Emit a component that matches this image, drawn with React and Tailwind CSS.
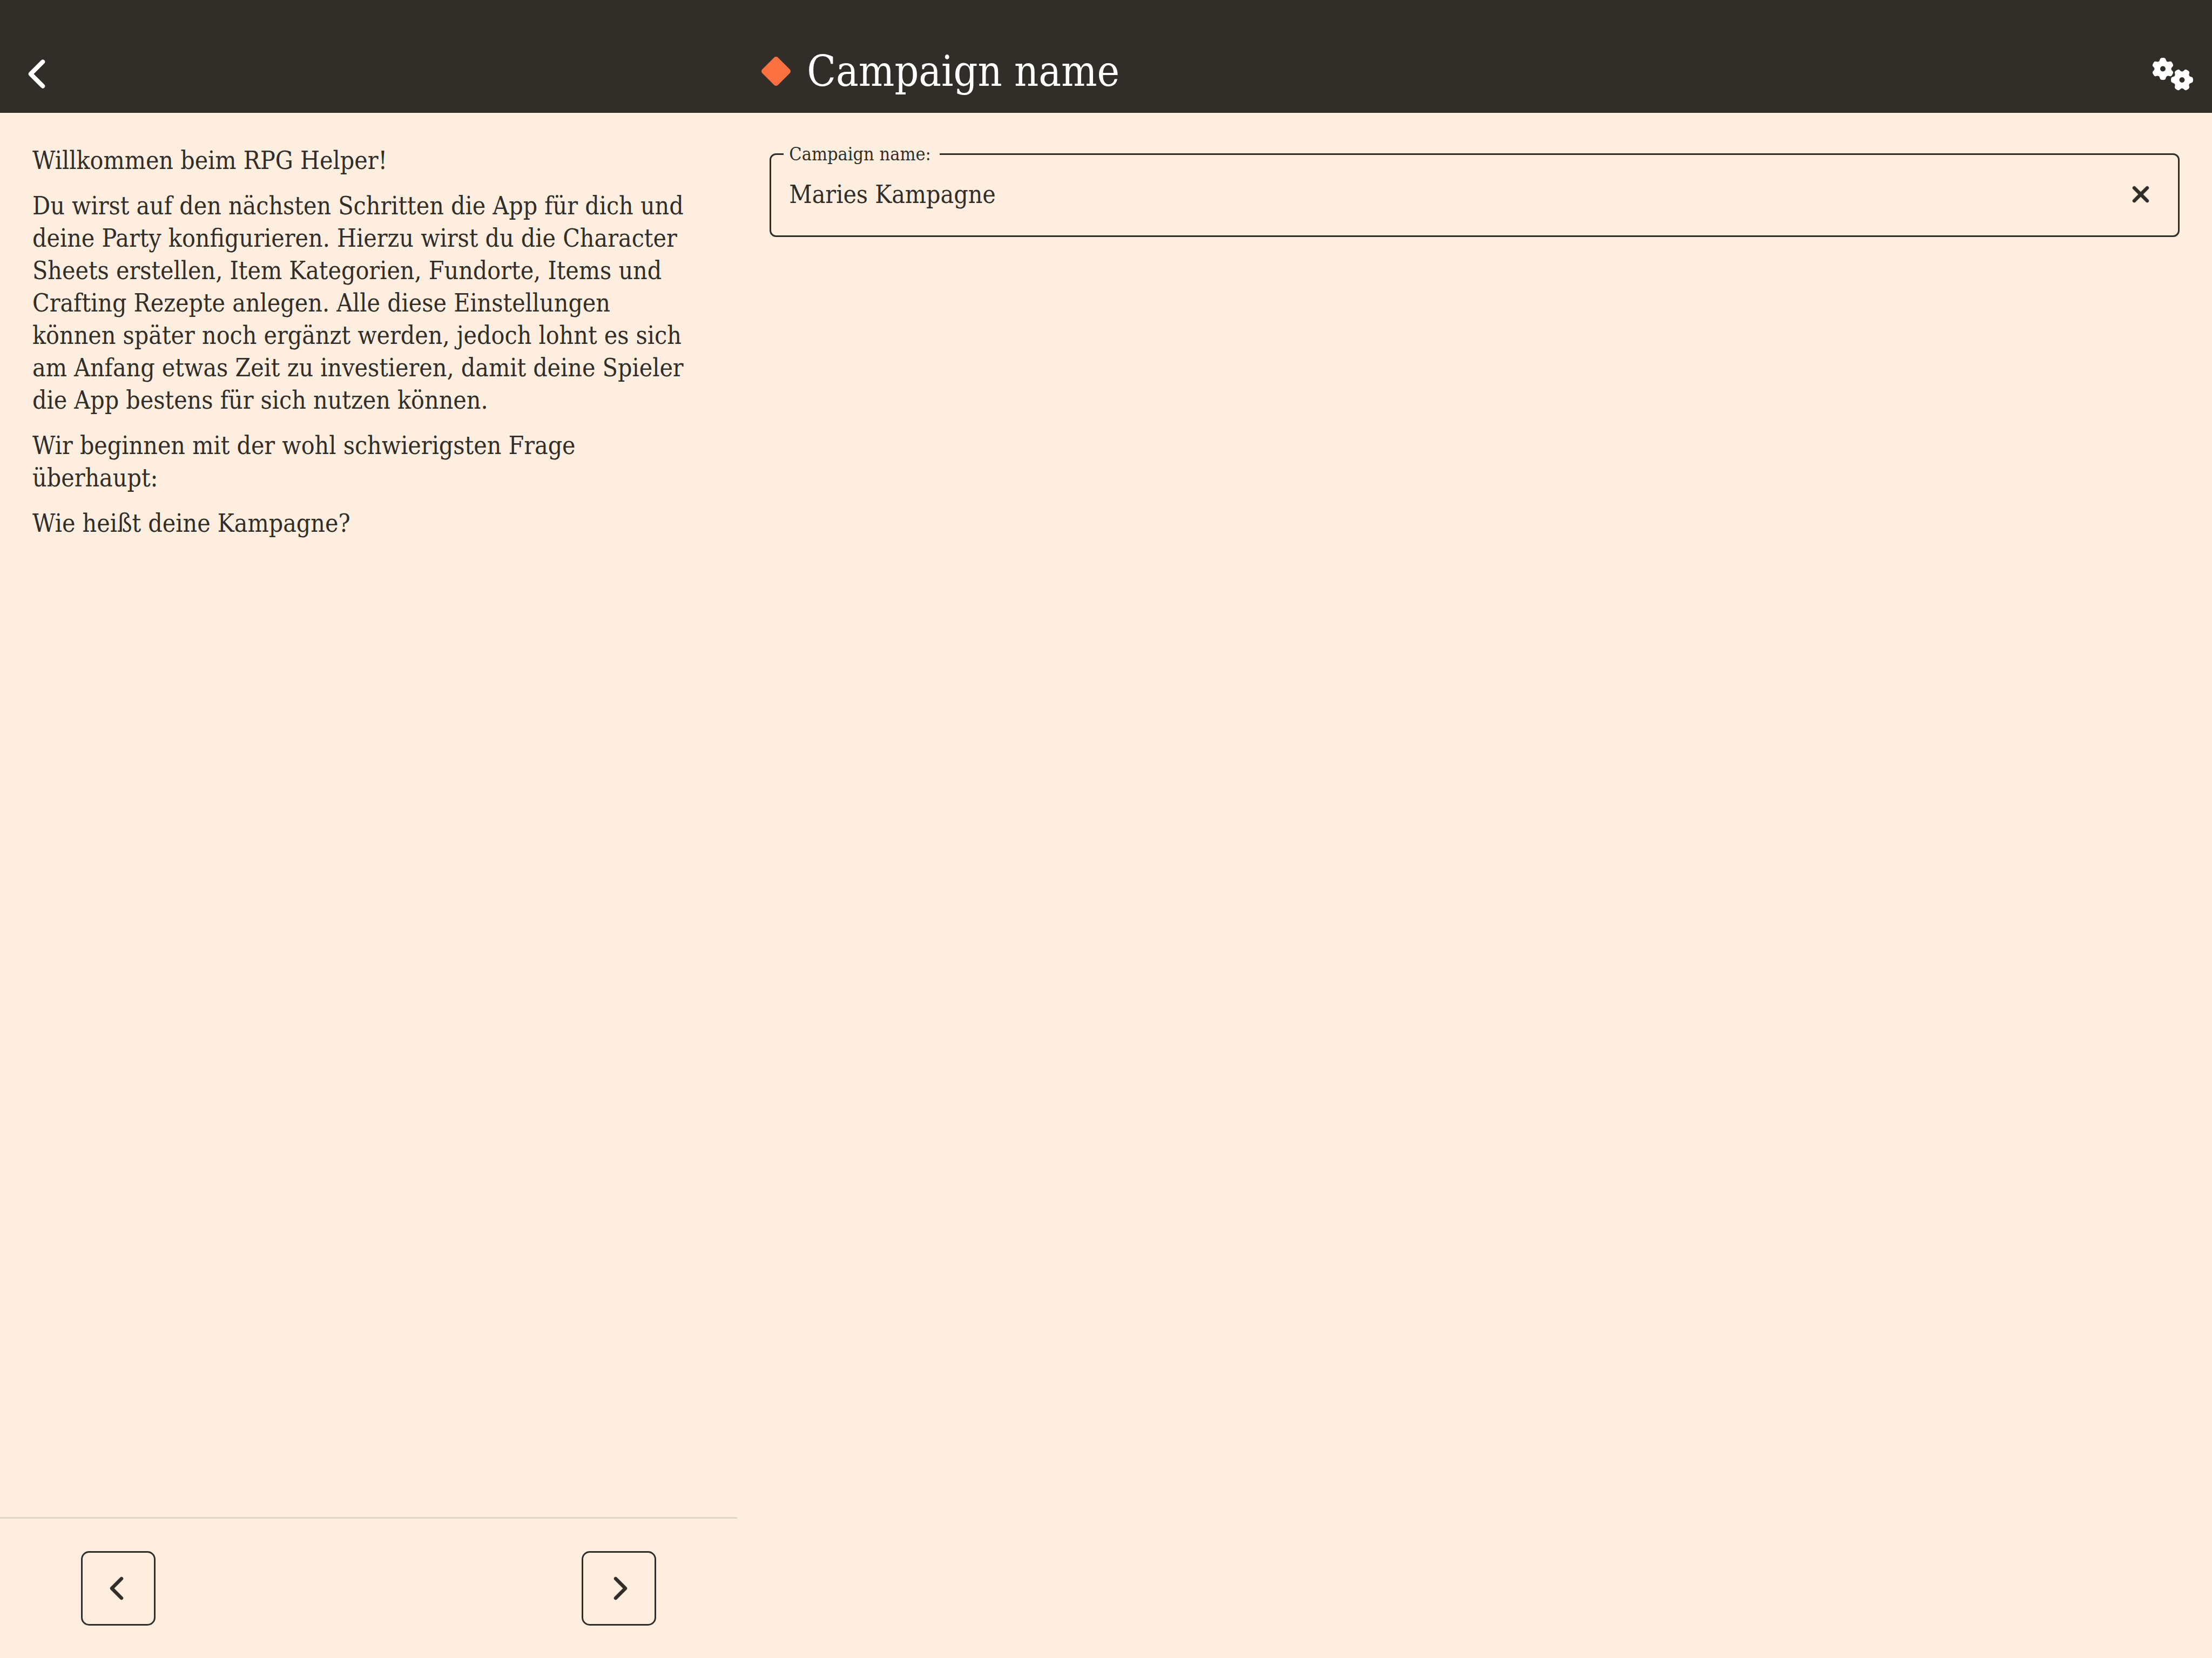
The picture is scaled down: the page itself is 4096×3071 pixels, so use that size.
import { useState } from "react";

function Glyph({ d, className }) {
  return (
    <svg
      viewBox="0 0 320 512"
      fill="currentColor"
      stroke="currentColor"
      strokeWidth="8"
      strokeLinejoin="round"
      className={className}
      aria-hidden="true"
    >
      <path d={d} />
    </svg>
  );
}

const CHEVRON_LEFT =
  "M9.4 233.4c-12.5 12.5-12.5 32.8 0 45.3l192 192c12.5 12.5 32.8 12.5 45.3 0s12.5-32.8 0-45.3L77.3 256 246.6 86.6c12.5-12.5 12.5-32.8 0-45.3s-32.8-12.5-45.3 0l-192 192z";
const CHEVRON_RIGHT =
  "M310.6 233.4c12.5 12.5 12.5 32.8 0 45.3l-192 192c-12.5 12.5-32.8 12.5-45.3 0s-12.5-32.8 0-45.3L242.7 256 73.4 86.6c-12.5-12.5-12.5-32.8 0-45.3s32.8-12.5 45.3 0l192 192z";
const X_MARK =
  "M310.6 361.4c12.5 12.5 12.5 32.75 0 45.25C304.4 412.9 296.2 416 288 416s-16.38-3.125-22.62-9.375L160 301.3L54.63 406.6C48.38 412.9 40.19 416 32 416S15.63 412.9 9.375 406.6c-12.5-12.5-12.5-32.75 0-45.25l105.4-105.4L9.375 150.6c-12.5-12.5-12.5-32.75 0-45.25s32.75-12.5 45.25 0L160 210.8l105.4-105.4c12.5-12.5 32.75-12.5 45.25 0s12.5 32.75 0 45.25l-105.4 105.4L310.6 361.4z";

function Diamond({ className }) {
  return (
    <svg viewBox="0 0 54 54" fill="currentColor" className={className} aria-hidden="true">
      <path d="M23.5 1.5a5 5 0 0 1 7 0l22 22a5 5 0 0 1 0 7l-22 22a5 5 0 0 1-7 0l-22-22a5 5 0 0 1 0-7z" />
    </svg>
  );
}

function Gear({ x, y, turn }) {
  return (
    <g transform={`translate(${x} ${y}) rotate(${turn})`}>
      <circle r="10.2" fill="none" stroke="currentColor" strokeWidth="10.4" />
      {[0, 60, 120, 180, 240, 300].map((angle) => (
        <path
          key={angle}
          transform={`rotate(${angle})`}
          d="M-8.5-12C-6.8-14-6-15-5.4-17.4Q-4.9-20-2.6-20.3Q0-20.7 2.6-20.3Q4.9-20 5.4-17.4C6-15 6.8-14 8.5-12z"
        />
      ))}
    </g>
  );
}

function Gears({ className }) {
  return (
    <svg viewBox="0 0 75 60" fill="currentColor" className={className} aria-hidden="true">
      <Gear x={19} y={20.5} turn={0} />
      <Gear x={54.5} y={41} turn={30} />
    </svg>
  );
}

const stepButton =
  "flex size-[138px] items-center justify-center rounded-[15px] border-3 border-[#312e29]";

export default function App() {
  const [name, setName] = useState("Maries Kampagne");

  return (
    <div className="flex min-h-screen flex-col bg-[#fdeee0] font-['DejaVu_Serif_Condensed','DejaVu_Serif',serif] text-[46px] leading-[60px] text-[#312e29]">
      <header className="flex h-[209px] items-center bg-[#312e29] pt-16 text-white">
        <div className="flex w-1/3 pl-[53px]">
          <button type="button" aria-label="Back">
            <Glyph d={CHEVRON_LEFT} className="h-[60px] overflow-visible" />
          </button>
        </div>
        <div className="flex flex-1 items-center justify-between pr-[35px] pl-[45px]">
          <div className="flex items-center gap-[30px] pb-[10px]">
            <Diamond className="size-[54px] text-[#fb7140]" />
            <h1 className="text-[78px] leading-[96px]">Campaign name</h1>
          </div>
          <button type="button" aria-label="Settings">
            <Gears className="h-[60px] w-[75px] overflow-visible" />
          </button>
        </div>
      </header>

      <div className="flex flex-1">
        <aside className="flex w-1/3 flex-col">
          <div className="flex flex-1 flex-col gap-6 px-[60px] pt-[58px] whitespace-nowrap">
            <p>Willkommen beim RPG Helper!</p>
            <p>
              Du wirst auf den nächsten Schritten die App für dich und
              <br />
              deine Party konfigurieren. Hierzu wirst du die Character
              <br />
              Sheets erstellen, Item Kategorien, Fundorte, Items und
              <br />
              Crafting Rezepte anlegen. Alle diese Einstellungen
              <br />
              können später noch ergänzt werden, jedoch lohnt es sich
              <br />
              am Anfang etwas Zeit zu investieren, damit deine Spieler
              <br />
              die App bestens für sich nutzen können.
            </p>
            <p>
              Wir beginnen mit der wohl schwierigsten Frage
              <br />
              überhaupt:
            </p>
            <p>Wie heißt deine Kampagne?</p>
          </div>
          <nav className="flex justify-between border-t-3 border-[#e4d6c5] px-[150px] py-[60px]">
            <button type="button" aria-label="Previous step" className={stepButton}>
              <Glyph d={CHEVRON_LEFT} className="h-[48px] overflow-visible" />
            </button>
            <button type="button" aria-label="Next step" className={stepButton}>
              <Glyph d={CHEVRON_RIGHT} className="h-[48px] overflow-visible" />
            </button>
          </nav>
        </aside>

        <main className="flex-1 px-[60px] pt-[52px]">
          <fieldset className="rounded-xl border-3 border-[#312e29] px-[23px]">
            <legend className="pr-4 pl-[10px] text-[34px] leading-[48px]">
              <label htmlFor="campaign-name">Campaign name:</label>
            </legend>
            <div className="flex items-center pt-[21px] pr-[31px] pb-[46px] pl-[10px]">
              <input
                id="campaign-name"
                type="text"
                value={name}
                onChange={(e) => setName(e.target.value)}
                className="h-[60px] min-w-0 flex-1 bg-transparent outline-none"
              />
              <button type="button" aria-label="Clear" onClick={() => setName("")}>
                <Glyph d={X_MARK} className="h-[48px] overflow-visible" />
              </button>
            </div>
          </fieldset>
        </main>
      </div>
    </div>
  );
}
